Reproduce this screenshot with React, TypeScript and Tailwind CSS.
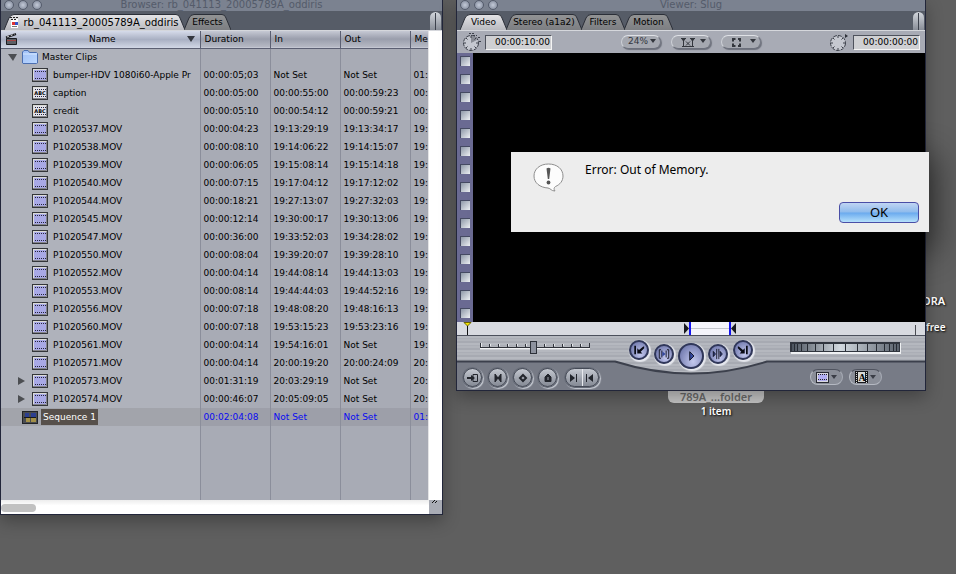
import type { ReactNode } from 'react';
import clsx from 'clsx';

type Clip = {
  name: string;
  kind?: 'clip' | 'text';
  expandable?: boolean;
  times: [string, string, string, string];
};

const clips: Clip[] = [
  { name: 'bumper-HDV 1080i60-Apple Pr', times: ['00:00:05;03', 'Not Set', 'Not Set', '01:'] },
  { name: 'caption', kind: 'text', times: ['00:00:05:00', '00:00:55:00', '00:00:59:23', '00:'] },
  { name: 'credit', kind: 'text', times: ['00:00:05:10', '00:00:54:12', '00:00:59:21', '00:'] },
  { name: 'P1020537.MOV', times: ['00:00:04:23', '19:13:29:19', '19:13:34:17', '19:'] },
  { name: 'P1020538.MOV', times: ['00:00:08:10', '19:14:06:22', '19:14:15:07', '19:'] },
  { name: 'P1020539.MOV', times: ['00:00:06:05', '19:15:08:14', '19:15:14:18', '19:'] },
  { name: 'P1020540.MOV', times: ['00:00:07:15', '19:17:04:12', '19:17:12:02', '19:'] },
  { name: 'P1020544.MOV', times: ['00:00:18:21', '19:27:13:07', '19:27:32:03', '19:'] },
  { name: 'P1020545.MOV', times: ['00:00:12:14', '19:30:00:17', '19:30:13:06', '19:'] },
  { name: 'P1020547.MOV', times: ['00:00:36:00', '19:33:52:03', '19:34:28:02', '19:'] },
  { name: 'P1020550.MOV', times: ['00:00:08:04', '19:39:20:07', '19:39:28:10', '19:'] },
  { name: 'P1020552.MOV', times: ['00:00:04:14', '19:44:08:14', '19:44:13:03', '19:'] },
  { name: 'P1020553.MOV', times: ['00:00:08:14', '19:44:44:03', '19:44:52:16', '19:'] },
  { name: 'P1020556.MOV', times: ['00:00:07:18', '19:48:08:20', '19:48:16:13', '19:'] },
  { name: 'P1020560.MOV', times: ['00:00:07:18', '19:53:15:23', '19:53:23:16', '19:'] },
  { name: 'P1020561.MOV', times: ['00:00:04:14', '19:54:16:01', 'Not Set', '19:'] },
  { name: 'P1020571.MOV', times: ['00:00:04:14', '20:00:19:20', '20:00:24:09', '20:'] },
  { name: 'P1020573.MOV', expandable: true, times: ['00:01:31:19', '20:03:29:19', 'Not Set', '20:'] },
  { name: 'P1020574.MOV', expandable: true, times: ['00:00:46:07', '20:05:09:05', 'Not Set', '20:'] },
];

const cell = 'border-l border-[#8b8e9b] pt-px pl-[3px] overflow-hidden whitespace-nowrap';

const ClipIcon = ({ text = false }: { text?: boolean }) => (
  <svg width="16" height="14" viewBox="0 0 16 14" className="shrink-0" aria-hidden="true">
    <rect width="16" height="14" fill="#34363a" />
    <rect x="1" y="1" width="14" height="12" fill="#dcdcd8" />
    <path d="M14.5 1.500V12.500H1" stroke="#85858a" fill="none" />
    <rect x="2" y="2" width="12" height="10" fill={text ? '#e2e2ec' : '#a9a9e6'} />
    <path d="M3 3.500H14M3 10.500H14" stroke="#25253a" strokeDasharray="1 1" />
    {text && (
      <text x="8" y="9" textAnchor="middle" fontSize="5" fontWeight="bold" fill="#000">
        ABC
      </text>
    )}
  </svg>
);

const FolderIcon = () => (
  <svg width="16" height="14" viewBox="0 0 16 14" className="shrink-0" aria-hidden="true">
    <defs>
      <linearGradient id="folder" x2="1" y2="1">
        <stop stopColor="#9fc0f8" />
        <stop offset="1" stopColor="#bcd8ff" />
      </linearGradient>
    </defs>
    <path d="M.5 2L2 .5H6L7.500 2.500H14.500L15.500 3.500V13L14.500 13.500H1L.5 13Z" fill="url(#folder)" stroke="#4c6fb0" />
    <path d="M1 4H15" stroke="#d6e7ff" />
  </svg>
);

const SequenceIcon = () => (
  <svg width="16" height="13" viewBox="0 0 16 13" className="shrink-0" aria-hidden="true">
    <rect width="16" height="13" fill="#222428" />
    <rect x="1" y="1" width="14" height="11" fill="#4a4c50" />
    <rect x="3" y="2" width="4" height="4" fill="#2c3f90" />
    <rect x="9" y="2" width="5" height="4" fill="#2c3f90" />
    <rect x="4" y="7" width="4" height="4" fill="#a39048" />
    <rect x="9" y="7" width="5" height="4" fill="#a39048" />
    <path d="M2 6.500H14" stroke="#17181a" />
  </svg>
);

const Stopwatch = ({ full = false }: { full?: boolean }) => (
  <svg width="20" height="20" viewBox="0 0 20 20" className="shrink-0" aria-hidden="true">
    <circle cx="9" cy="11" r="7.500" fill="#c5c8d0" stroke="#3c404a" strokeDasharray="4 1" />
    {full && <path d="M9 11V4A7 7 0 0 1 15 8Z" fill="#888b94" />}
    <path
      d="M9 4V6M9 16V18M2 11H4M14 11H16M4 6L5.500 7.500M14 6L12.500 7.500M4 16L5.500 14.500M14 16L12.500 14.500"
      stroke="#3c404a"
      fill="none"
    />
    {full ? (
      <path d="M7 1.500H13M11 3.500H15M16 5.500H18M17 9.500H19" stroke="#3c404a" strokeDasharray="2 1" />
    ) : (
      <path d="M16 2L19 4L16 6Z" fill="#2c3038" />
    )}
  </svg>
);

const Light = () => (
  <span className="size-[10px] rounded-full border border-[#555c6c] bg-radial from-[#c3cad8] to-[#7c8495]" />
);

const TitleBar = ({ title }: { title: string }) => (
  <div className="grid h-[11px] grid-cols-[1fr_auto_1fr] items-start overflow-hidden bg-[#7b8290]">
    <div className="flex gap-1 pl-[3px]">
      <Light />
      <Light />
      <Light />
    </div>
    <h1 className="text-[10px] leading-[10px] text-[#545b6a]">{title}</h1>
  </div>
);

type TabProps = { label: string; width: number; active?: boolean; icon?: ReactNode };

const Tab = ({ label, width: w, active, icon }: TabProps) => (
  <button
    type="button"
    role="tab"
    aria-selected={!!active}
    className={clsx('relative -mr-px flex h-4 items-center justify-center gap-1', active && 'z-10')}
    style={{ width: w }}
  >
    <svg width={w} height="16" className="absolute inset-0" aria-hidden="true">
      <defs>
        <linearGradient id="tab-on" x2="0" y2="1">
          <stop stopColor="#e4e4e6" />
          <stop offset="1" stopColor="#b9bac0" />
        </linearGradient>
        <linearGradient id="tab-off" x2="0" y2="1">
          <stop stopColor="#929394" />
          <stop offset="1" stopColor="#7c7e82" />
        </linearGradient>
      </defs>
      <path
        d={`M0 16L5 4Q6.500 .5 10 .5H${w - 9}Q${w - 6} .5 ${w - 5} 4L${w} 16`}
        fill={active ? 'url(#tab-on)' : 'url(#tab-off)'}
        stroke="#2b2f38"
      />
    </svg>
    {icon}
    <span className={clsx('relative pt-px whitespace-nowrap text-black', active && icon ? 'text-[10px]' : 'text-[9px]')}>
      {label}
    </span>
  </button>
);

const TabStrip = ({ children }: { children: ReactNode }) => (
  <div className="flex h-[20px] items-end justify-between border-b border-[#d5d7dc] bg-[#565c67] pl-[3px]">
    <div role="tablist" className="flex">{children}</div>
    <span className="mr-px flex h-[18px] w-[11px] justify-center rounded-t-full bg-linear-to-b from-[#d3d7dd] to-[#898e98]">
      <span className="mt-px w-px bg-[#3c414c]" />
    </span>
  </div>
);

const ColumnHead = ({ children }: { children: ReactNode }) => (
  <th scope="col" className="overflow-hidden border-l border-[#5b5f72] pl-1 text-left font-normal">
    {children}
  </th>
);

const BrowserWindow = () => (
  <section aria-label="Browser" className="absolute top-0 left-0 w-[443px] border border-t-0 border-[#22263a] bg-[#a8abb5] shadow-[0_6px_16px_rgba(0,0,0,0.3)]">
    <TitleBar title="Browser: rb_041113_20005789A_oddiris" />
    <TabStrip>
      <Tab
        label="rb_041113_20005789A_oddiris"
        width={181}
        active
        icon={
          <svg width="9" height="12" viewBox="0 0 9 12" className="relative shrink-0" aria-hidden="true">
            <path d="M1 3H8V12H1Z" fill="#fff" />
            <path d="M0 1.500H8M1 3.500H7" stroke="#222" strokeDasharray="2 1" />
            <rect x="2" y="6" width="3" height="3" fill="#d33" />
            <rect x="5" y="6" width="3" height="3" fill="#35c" />
            <path d="M2 10.500H7" stroke="#777" />
          </svg>
        }
      />
      <Tab label="Effects" width={47} />
    </TabStrip>
    <div className="flex">
      <div className="min-w-0 flex-1">
        <table className="w-full table-fixed border-collapse text-[9px]">
          <colgroup>
            <col />
            <col className="w-[70px]" />
            <col className="w-[70px]" />
            <col className="w-[70px]" />
            <col className="w-[18px]" />
          </colgroup>
          <thead>
            <tr className="h-[17px] border-b border-[#5b5f72] bg-linear-to-b from-[#c6c9d4] via-[#9a9eac] to-[#b6b9c4]">
              <th scope="col" className="bg-linear-to-b from-[#d6dbea] via-[#a9b0c3] to-[#d2d8e6] font-normal">
                <div className="flex items-center justify-between px-1">
                  <svg width="13" height="12" viewBox="0 0 13 12" aria-hidden="true">
                    <path d="M1.500 5.500H11.500V11.500H1.500Z" fill="#5c5f66" stroke="#1b1c20" />
                    <path d="M1 4.500L11 1" stroke="#1b1c20" strokeWidth="2" />
                    <path d="M2 4L10 1" stroke="#ddd" strokeDasharray="2 2" />
                    <path d="M2 7.500H11" stroke="#a34444" />
                  </svg>
                  <span>Name</span>
                  <svg width="8" height="6" className="mr-px" aria-hidden="true">
                    <path d="M0 0H8L4 6Z" fill="#34373f" />
                  </svg>
                </div>
              </th>
              <ColumnHead>Duration</ColumnHead>
              <ColumnHead>In</ColumnHead>
              <ColumnHead>Out</ColumnHead>
              <ColumnHead>Me</ColumnHead>
            </tr>
          </thead>
          <tbody>
            <tr className="h-[18px]">
              <td className="bg-[#afb2bb]">
                <div className="flex items-center pl-[7px]">
                  <svg width="9" height="7" aria-hidden="true">
                    <path d="M0 0H9L5 7Z" fill="#4c4e52" />
                  </svg>
                  <span className="ml-[5px] flex items-center gap-1">
                    <FolderIcon />
                    Master Clips
                  </span>
                </div>
              </td>
              <td className={cell} />
              <td className={cell} />
              <td className={cell} />
              <td className={cell} />
            </tr>
            {clips.map((clip) => (
              <tr key={clip.name} className="h-[18px]">
                <td className="overflow-hidden bg-[#afb2bb]">
                  <div className="flex items-center gap-[5px] whitespace-nowrap pl-[17px]">
                    <span className="-mr-px w-[10px] shrink-0">
                      {clip.expandable && (
                        <svg width="7" height="8" aria-hidden="true">
                          <path d="M0 0L7 4L0 8Z" fill="#4c4e52" />
                        </svg>
                      )}
                    </span>
                    <ClipIcon text={clip.kind === 'text'} />
                    <span className="pt-px">{clip.name}</span>
                  </div>
                </td>
                {clip.times.map((time, i) => (
                  <td key={i} className={cell}>{time}</td>
                ))}
              </tr>
            ))}
            <tr className="h-[18px] bg-[#9d9fa9] text-[#0a0af0]">
              <td className="bg-[#a2a4ab]">
                <div className="flex items-center gap-[3px] pl-[21px]">
                  <SequenceIcon />
                  <span className="bg-[#57504b] px-[2px] leading-4 text-white">Sequence 1</span>
                </div>
              </td>
              <td className={cell}>00:02:04:08</td>
              <td className={cell}>Not Set</td>
              <td className={cell}>Not Set</td>
              <td className={cell}>01:</td>
            </tr>
            <tr className="h-[74px]">
              <td className="bg-[#afb2bb]" />
              <td className={cell} />
              <td className={cell} />
              <td className={cell} />
              <td className={cell} />
            </tr>
          </tbody>
        </table>
      </div>
      <div className="w-[14px] border-l border-[#e4e4e6] bg-white" />
    </div>
    <div className="flex h-[14px]">
      <div className="flex flex-1 items-center bg-linear-to-b from-[#ededed] to-white to-40%">
        <span className="mt-[2px] h-2 w-[35px] rounded-full bg-[#c1c1c1]" />
      </div>
      <span className="w-[13px] bg-[#a9acb5]">
        <svg width="8" height="4" className="ml-[3px]" aria-hidden="true">
          <path d="M0 3L3 0M3 3L5 1" stroke="#111" />
        </svg>
      </span>
    </div>
  </section>
);

const PopupButton = ({ label, children }: { label: string; children: ReactNode }) => (
  <button
    type="button"
    aria-label={label}
    className="flex h-[14px] w-10 items-center justify-end gap-[2px] rounded-full border border-t-[#dfe1e6] border-r-[#737783] border-b-[#6c707c] border-l-[#cfd2d8] bg-[#a5a8b0] pr-1 text-[#33363d] shadow-[1px_1px_1px_#6d717c]"
  >
    {children}
    <svg width="6" height="4" className="mb-[3px]" aria-hidden="true">
      <path d="M0 0H6L3 4Z" fill="currentColor" />
    </svg>
  </button>
);

const TimeField = ({ label, value }: { label: string; value: string }) => (
  <input
    aria-label={label}
    defaultValue={value}
    className="h-[15px] w-[67px] border border-t-[#4e525c] border-r-[#f4f4f4] border-b-[#f4f4f4] border-l-[#4e525c] bg-[#cfd0d3] pr-px text-right text-[9px] text-black outline-none"
  />
);

const RoundButton = ({ label, children }: { label: string; children: ReactNode }) => (
  <button
    type="button"
    aria-label={label}
    className="flex size-[19px] items-center justify-center rounded-full border border-[#454a56] bg-linear-to-b from-[#c4c8d0] to-[#858a95] shadow-[0_0_0_1px_#666b77,1px_1px_1px_1px_#c8ccd4]"
  >
    <svg width="12" height="12" viewBox="0 0 12 12" fill="#22252c" stroke="#22252c" aria-hidden="true">
      {children}
    </svg>
  </button>
);

type TransportButtonProps = { label: string; className: string; children: ReactNode };

const TransportButton = ({ label, className, children }: TransportButtonProps) => (
  <button
    type="button"
    aria-label={label}
    className={clsx(
      'flex items-center justify-center rounded-full border-2 border-[#30375a] bg-radial-[at_60%_75%] from-[#c3c8ee] to-[#6069a0] shadow-[1px_1px_1px_1px_#e6e8ee]',
      className,
    )}
  >
    <svg width="12" height="12" viewBox="0 0 14 14" fill="#34479c" stroke="#090b16" aria-hidden="true">
      {children}
    </svg>
  </button>
);

const GeneratorButton = ({ label, children }: { label: string; children: ReactNode }) => (
  <button
    type="button"
    aria-label={label}
    className="flex h-4 w-[33px] items-center justify-center gap-[2px] rounded-full border border-t-[#50545f] border-r-[#a7abb5] border-b-[#b5b9c2] border-l-[#b5b9c2] bg-[#8a8e98]"
  >
    {children}
    <svg width="6" height="4" aria-hidden="true">
      <path d="M0 0H6L3 4Z" fill="#3a3d46" />
    </svg>
  </button>
);

const Scrubber = () => (
  <div className="flex h-[14px] items-stretch justify-between border-b border-[#4c505c] bg-[#d8dae0]">
    <svg width="9" height="13" className="ml-[6px]" aria-hidden="true">
      <path d="M4.500 4V13" stroke="#111" strokeWidth="1" />
      <path d="M1 .5H8L4.500 4Z" fill="#f7e600" stroke="#6c6500" />
    </svg>
    <svg width="54" height="13" className="ml-8" aria-hidden="true">
      <rect x="7" width="40" height="13" fill="#f5f5fb" />
      <path d="M7 6.500H46" stroke="#c3c5cc" />
      <path d="M7 0V13M47 0V13" stroke="#1414f0" strokeWidth="2" />
      <path d="M1 1L6 6.500L1 12ZM53 1L48 6.500L53 12Z" fill="#17181f" />
    </svg>
    <span className="mt-[3px] mr-[9px] w-px bg-[#4a4c52]" />
  </div>
);

const JogWheel = () => (
  <svg width="112" height="13" viewBox="0 0 112 13" role="img" aria-label="Jog control">
    <defs>
      <linearGradient id="jog">
        <stop stopColor="#4c545f" />
        <stop offset=".45" stopColor="#d3dae0" />
        <stop offset="1" stopColor="#59616c" />
      </linearGradient>
    </defs>
    <rect x="1" y="1" width="110" height="11" fill="#eff1f3" />
    <rect width="110" height="10" fill="#30353e" />
    <rect x="2" y="2" width="107" height="7" fill="url(#jog)" />
    <path
      d="M4.500 2V9M7.500 2V9M11.500 2V9M17.500 2V9M25.500 2V9M33.500 2V9M43.500 2V9M55.500 2V9M67.500 2V9M77.500 2V9M86.500 2V9M94.500 2V9M99.500 2V9M103.500 2V9M106.500 2V9"
      stroke="#262b33"
    />
  </svg>
);

const Controls = () => (
  <div className="relative bg-[repeating-linear-gradient(180deg,#b5b8bf_0_2px,#abaeb6_2px_3px,#b1b4bb_3px_5px,#a7aab2_5px_7px)]">
    <svg viewBox="0 0 468 54" preserveAspectRatio="none" className="absolute inset-0 size-full" aria-hidden="true">
      <path d="M0 25.500H158C182 33 206 37.500 234 37.500S286 33 310 25.500H468V54H0Z" fill="#777b86" />
      <path d="M0 25.500H158C182 33 206 37.500 234 37.500S286 33 310 25.500H468" fill="none" stroke="#3c404c" strokeWidth="2" />
    </svg>
    <div className="relative grid h-[54px] grid-cols-[1fr_auto_1fr]">
      <div className="flex flex-col">
        <div className="flex h-[29px] items-start pt-[5px] pl-[23px]">
          <div className="relative">
            <svg width="110" height="12" aria-hidden="true">
              <path d="M0 7.500H110" stroke="#f1f2f4" strokeWidth="2" />
              <path d="M0 6.500H110" stroke="#30333b" />
              <path
                d="M.5 2V7M9.500 3V6M18.500 3V6M27.500 3V6M36.500 3V6M45.500 3V6M64.500 3V6M73.500 3V6M82.500 3V6M91.500 3V6M100.500 3V6M109.500 2V7"
                stroke="#30333b"
              />
              <path
                d="M1.500 2V6M10.500 3V5M19.500 3V5M28.500 3V5M37.500 3V5M46.500 3V5M65.500 3V5M74.500 3V5M83.500 3V5M92.500 3V5M101.500 3V5"
                stroke="#e6e8eb"
              />
            </svg>
            <input
              type="range"
              aria-label="Shuttle"
              defaultValue={49}
              className="absolute inset-0 h-3 w-full appearance-none bg-transparent [&::-webkit-slider-thumb]:h-[13px] [&::-webkit-slider-thumb]:w-[7px] [&::-webkit-slider-thumb]:appearance-none [&::-webkit-slider-thumb]:border [&::-webkit-slider-thumb]:border-[#2c3038] [&::-webkit-slider-thumb]:bg-[#8d929e]"
            />
          </div>
        </div>
        <div className="flex items-center gap-[6px] pt-[3px] pl-[6px]">
          <RoundButton label="Match frame">
            <path d="M6 2.500H10.500V9.500H6V2.500Z" fill="none" />
            <path d="M0 5H4V3L8 6L4 9V7H0Z" stroke="none" />
          </RoundButton>
          <RoundButton label="Mark clip">
            <path d="M3 2L6 6L9 2V10L6 6L3 10Z" />
          </RoundButton>
          <RoundButton label="Add keyframe">
            <path d="M6 3L9 6L6 9L3 6Z" fill="none" strokeWidth="2" />
          </RoundButton>
          <RoundButton label="Add marker">
            <path d="M3 9.500V5L6 2L9 5V9.500Z" />
            <path d="M6 5V8" stroke="#9da1aa" />
          </RoundButton>
          <div className="ml-[2px] flex h-[19px] w-[34px] overflow-hidden rounded-full border border-[#454a56] bg-linear-to-b from-[#c4c8d0] to-[#858a95] shadow-[0_0_0_1px_#666b77,1px_1px_1px_1px_#c8ccd4]">
            <button type="button" aria-label="Mark in" className="flex flex-1 items-center justify-center border-r border-[#e8eaee]">
              <svg width="8" height="8" fill="#22252c" aria-hidden="true">
                <path d="M0 0L5 4L0 8ZM6 0H7V8H6Z" />
              </svg>
            </button>
            <button type="button" aria-label="Mark out" className="flex flex-1 items-center justify-center">
              <svg width="8" height="8" fill="#22252c" aria-hidden="true">
                <path d="M7 0L2 4L7 8ZM0 0H1V8H0Z" />
              </svg>
            </button>
          </div>
        </div>
      </div>
      <div className="flex items-start gap-1">
        <TransportButton label="Previous edit" className="mt-1 mr-px size-5">
          <path d="M2.500 2V12" strokeWidth="2" />
          <path d="M5 5V11H11L9 9L13 5V3H12L7 7Z" stroke="none" fill="#090b16" />
        </TransportButton>
        <TransportButton label="Play in to out" className="mt-2 size-5">
          <path d="M3.500 2H1.500V12H3.500M10.500 2H12.500V12H10.500M4.500 3V11M9.500 3V11" fill="none" />
          <path d="M5 4L9 7L5 10Z" stroke="none" />
        </TransportButton>
        <TransportButton label="Play" className="mt-[7px] size-[26px]">
          <path d="M5.500 2L10.500 7L5.500 12Z" />
        </TransportButton>
        <TransportButton label="Play around current frame" className="mt-2 size-5">
          <path d="M1.500 4L4 7L1.500 10ZM9.500 4L12 7L9.500 10Z" />
          <path d="M5.500 1V13M8 1V13" />
        </TransportButton>
        <TransportButton label="Next edit" className="mt-1 ml-px size-5">
          <path d="M11.500 2V12" strokeWidth="2" />
          <path d="M9 5V11H3L5 9L1 5V3H2L7 7Z" stroke="none" fill="#090b16" />
        </TransportButton>
      </div>
      <div className="flex flex-col items-end">
        <div className="h-[33px] pt-[6px] pr-[23px]">
          <JogWheel />
        </div>
        <div className="flex gap-[6px] pr-[43px]">
          <GeneratorButton label="Recent clips">
            <svg width="13" height="11" aria-hidden="true">
              <rect width="13" height="11" fill="#292b33" />
              <rect x="1" y="1" width="11" height="9" fill="#d9d9df" />
              <rect x="2" y="2" width="9" height="7" fill="#b1aef0" />
              <path d="M2 2.500H11M2 7.500H11" stroke="#222" strokeDasharray="1 1" />
            </svg>
          </GeneratorButton>
          <GeneratorButton label="Generators">
            <svg width="13" height="12" aria-hidden="true">
              <rect width="13" height="12" fill="#17181c" />
              <rect x="3" y="1" width="7" height="10" fill="#d9dad6" />
              <path d="M1.500 1V12M11.500 1V12" stroke="#d9dad6" strokeDasharray="1 1" />
              <text x="7" y="10" textAnchor="middle" fontFamily="Liberation Serif, serif" fontSize="10" fontWeight="bold" fill="#000">
                A
              </text>
            </svg>
          </GeneratorButton>
        </div>
      </div>
    </div>
  </div>
);

const ViewerWindow = () => (
  <section aria-label="Viewer" className="absolute top-0 left-[456px] w-[470px] border border-t-0 border-[#22263a] bg-[#a8abb5] shadow-[0_6px_16px_rgba(0,0,0,0.3)]">
    <TitleBar title="Viewer: Slug" />
    <TabStrip>
      <Tab label="Video" width={47} active />
      <Tab label="Stereo (a1a2)" width={76} />
      <Tab label="Filters" width={44} />
      <Tab label="Motion" width={49} />
    </TabStrip>
    <div className="grid h-[22px] grid-cols-[1fr_auto_1fr] items-center px-[5px] text-[9px]">
      <div className="flex items-center gap-[3px]">
        <Stopwatch full />
        <TimeField label="Timecode duration" value="00:00:10:00" />
      </div>
      <div className="flex gap-[10px]">
        <PopupButton label="Zoom">24%</PopupButton>
        <PopupButton label="Playhead sync">
          <svg width="15" height="9" className="mr-[2px]" fill="none" stroke="currentColor" aria-hidden="true">
            <path d="M0 .5H5M9 .5H14M2.500 0V9M11.500 0V9M5 3.500L9 7.500M9 3.500L5 7.500M1 8.500H13" />
            <path d="M1 1H4L2.500 3ZM10 1H13L11.500 3Z" fill="currentColor" />
          </svg>
        </PopupButton>
        <PopupButton label="View">
          <svg width="14" height="9" className="mr-[2px]" fill="none" stroke="currentColor" strokeWidth="2" aria-hidden="true">
            <path d="M3.500 1H1V3.500M1 5.500V8H3.500M6 1H8V3.500M8 5.500V8H6" />
          </svg>
        </PopupButton>
      </div>
      <div className="flex items-center justify-end gap-1">
        <Stopwatch />
        <TimeField label="Current timecode" value="00:00:00:00" />
      </div>
    </div>
    <div className="flex h-[269px] bg-black">
      <div className="flex w-4 flex-col items-center gap-2 overflow-hidden bg-[#6a6a92] pt-[3px]">
        {Array.from({ length: 15 }, (_, i) => (
          <span
            key={i}
            className="size-[10px] shrink-0 border-t border-l border-[#454a62] bg-linear-to-br from-[#8f99a8] to-[#eef1f4]"
          />
        ))}
      </div>
    </div>
    <Scrubber />
    <Controls />
  </section>
);

const ErrorDialog = () => (
  <div
    role="alertdialog"
    aria-labelledby="error-message"
    className="absolute top-[152px] left-[511px] flex w-[418px] flex-col bg-[#ededed] px-[10px] pt-[10px] pb-[9px] font-['Noto_Sans',sans-serif] text-black shadow-[0_12px_32px_8px_rgba(0,0,0,0.45)]"
  >
    <div className="flex h-10 items-start gap-[21px] pl-3">
      <svg width="31" height="30" viewBox="0 0 31 30" className="mt-px" aria-hidden="true">
        <path
          d="M15.500 1C7 1 1 6 1 13C1 20 7 24.500 15 25C18 25.500 18 28 22 28C20.500 26 21 24.500 22.500 23.500C27 21.500 30 18 30 13C30 6 24 1 15.500 1Z"
          fill="#fcfcfc"
          stroke="#8e8e8e"
        />
        <path d="M13.500 5.500Q15.500 4 17.500 5.500L16.200 16H14.800Z" fill="#555" />
        <circle cx="15.500" cy="19.500" r="1.900" fill="#555" />
      </svg>
      <p id="error-message" className="text-[12px] leading-4">Error: Out of Memory.</p>
    </div>
    <button
      type="button"
      className="h-[21px] w-20 self-end rounded-[4px] border border-[#4a4ea6] bg-[linear-gradient(180deg,#c0d5f3_0%,#8fbbec_48%,#6aaaee_52%,#b5e0fb_100%)] text-[13px] leading-none"
    >
      OK
    </button>
  </div>
);

const App = () => (
  <main className="relative h-screen w-full overflow-hidden bg-[#5f5f5f] font-['DejaVu_Sans',sans-serif] text-black">
    <div className="absolute top-[293px] left-[922px] flex flex-col gap-[10px] font-['Noto_Sans',sans-serif] text-[11px] leading-4 font-semibold text-white [text-shadow:1px_1px_2px_#000]">
      <span>ORA</span>
      <span className="pl-1 text-[10px]">free</span>
    </div>
    <div className="absolute top-[391px] left-[668px] flex w-24 flex-col items-center font-['Noto_Sans',sans-serif] font-semibold">
      <span className="h-3 w-full rounded-b-[6px] bg-[#c6c6c6] text-center text-[11px] leading-3 text-[#6b6b6b]">
        789A_...folder
      </span>
      <span className="text-[10px] leading-4 text-white [text-shadow:1px_1px_2px_#000]">1 item</span>
    </div>
    <BrowserWindow />
    <ViewerWindow />
    <ErrorDialog />
  </main>
);

export default App;
